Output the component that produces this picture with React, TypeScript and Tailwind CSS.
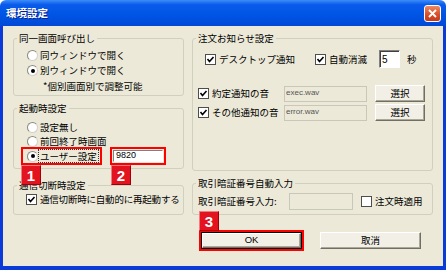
const face = "bg-[#ECE9D8]";

function Radio({ checked }: { checked?: boolean }) {
  return (
    <span className="flex h-[11px] w-[11px] shrink-0 items-center justify-center rounded-full border border-t-[#8a8a80] border-l-[#8a8a80] border-r-[#d4d0c8] border-b-[#d4d0c8] bg-white">
      {checked && <span className="h-[4px] w-[4px] rounded-full bg-black" />}
    </span>
  );
}

function Check({ checked }: { checked?: boolean }) {
  return (
    <span className="flex h-[11px] w-[11px] shrink-0 items-center justify-center border border-[#4d4d4d] bg-white">
      {checked && (
        <svg width="9" height="9" viewBox="0 0 9 9">
          <polyline points="1.5,4 3.5,6.5 7.5,2" fill="none" stroke="#000" strokeWidth="1.6" />
        </svg>
      )}
    </span>
  );
}

function Btn({ children, className }: { children: React.ReactNode; className?: string }) {
  return (
    <div
      className={
        "flex items-center justify-center border border-t-white border-l-white border-r-[#716F64] border-b-[#716F64] bg-[#F1EFE6] shadow-[inset_-1px_-1px_0_#ACA899] " +
        (className ?? "")
      }
    >
      {children}
    </div>
  );
}

function Badge({ n }: { n: string }) {
  return (
    <span className="absolute left-0 z-10 flex h-[20px] w-[20px] items-center justify-center border border-t-[#f37c82] border-l-[#f37c82] border-r-[#9c0008] border-b-[#9c0008] bg-[#E3141F] font-['Liberation_Sans',sans-serif] text-[15px] font-bold leading-none text-white">
      {n}
    </span>
  );
}

function Group({ title, className, children }: { title: string; className: string; children: React.ReactNode }) {
  return (
    <fieldset className={"rounded-[3px] border border-[#D0D0BF] " + className}>
      <legend className="ml-[3px] px-[2px] text-[9.5px] leading-[12px]">{title}</legend>
      {children}
    </fieldset>
  );
}

export default function App() {
  return (
    <div className="flex h-[270px] w-[446px] flex-col whitespace-nowrap font-['Noto_Sans_CJK_JP',sans-serif] text-black">
      {/* title bar */}
      <div className="flex h-[26px] shrink-0 items-center justify-between rounded-t-[6px] bg-[linear-gradient(to_bottom,#3D8EF8,#0A5BEC_18%,#0055E5_55%,#0049D6)] pl-[6px] pr-[5px]">
        <span className="text-[10.5px] font-bold text-white [text-shadow:1px_1px_#0a1f8a]">環境設定</span>
        <span className="flex h-[17px] w-[17px] items-center justify-center rounded-[3px] border border-white bg-[linear-gradient(to_bottom,#EE8A64,#D9502A_55%,#C23A1C)]">
          <svg width="9" height="9" viewBox="0 0 9 9">
            <path d="M1 1L8 8M8 1L1 8" stroke="#fff" strokeWidth="1.8" />
          </svg>
        </span>
      </div>

      {/* body */}
      <div className={"flex flex-1 border-x-[3px] border-b-[4px] border-[#0A3BD8] pl-[10px] pt-[6px] " + face}>
        {/* left column */}
        <div className="flex w-[171px] flex-col">
          <Group title="同一画面呼び出し" className="h-[64px]">
            <div className="flex flex-col pl-[13px] pt-[4px] text-[9.5px]">
              <div className="flex h-[15px] items-center gap-[2px]">
                <Radio />
                <span>同ウィンドウで開く</span>
              </div>
              <div className="flex h-[15px] items-center gap-[2px]">
                <Radio checked />
                <span>別ウィンドウで開く</span>
              </div>
              <div className="flex h-[16px] items-center pl-[16px]">*個別画面別で調整可能</div>
            </div>
          </Group>

          <Group title="起動時設定" className="mt-[6px] h-[67px]">
            <div className="flex flex-col pt-[6px] text-[9.5px]">
              <div className="flex h-[15px] items-center gap-[2px] pl-[13px]">
                <Radio />
                <span>設定無し</span>
              </div>
              <div className="flex h-[12px] items-center gap-[2px] pl-[13px]">
                <Radio />
                <span>前回終了時画面</span>
              </div>
              <div className="flex h-[18px] items-center pl-[7px]">
                <div className="relative flex h-[18px] w-[81px] items-center border-2 border-[#FF0000] pl-[4px]">
                  <Radio checked />
                  <span className="ml-[1px] px-[1px] leading-[12px] outline outline-1 outline-dotted outline-[#333]">ユーザー設定</span>
                  <span className="absolute left-[-2px] top-[16px]">
                    <Badge n="1" />
                  </span>
                </div>
                <div className="relative ml-[8px] flex h-[18px] w-[56px] items-center border-2 border-[#FF0000] p-[1px]">
                  <div className="flex h-[12px] w-[50px] items-center border border-t-[#808080] border-l-[#808080] border-r-white border-b-white bg-white pl-[2px] font-['Liberation_Sans',sans-serif] text-[9px]">
                    9820
                  </div>
                  <span className="absolute left-[-1px] top-[16px]">
                    <Badge n="2" />
                  </span>
                </div>
              </div>
            </div>
          </Group>

          <Group title="通信切断時設定" className="mt-[10px] h-[36px]">
            <div className="flex h-[14px] items-center gap-[3px] pl-[12px] pt-[2px] text-[9.5px]">
              <Check checked />
              <span className="tracking-[-0.2px]">通信切断時に自動的に再起動する</span>
            </div>
          </Group>
        </div>

        {/* right column */}
        <div className="ml-[8px] flex w-[241px] flex-col">
          <Group title="注文お知らせ設定" className="h-[139px]">
            <div className="flex flex-col pt-[6px] text-[9.5px]">
              <div className="flex h-[18px] items-center pl-[12px]">
                <div className="flex w-[110px] items-center gap-[3px]">
                  <Check checked />
                  <span>デスクトップ通知</span>
                </div>
                <div className="flex w-[64px] items-center gap-[3px]">
                  <Check checked />
                  <span>自動消滅</span>
                </div>
                <div className="flex h-[18px] w-[21px] items-start border border-t-[#808080] border-l-[#808080] border-r-white border-b-white bg-white pl-[2px] pt-[1px] font-['Liberation_Sans',sans-serif] text-[10px] shadow-[inset_1px_1px_0_#404040]">
                  5
                </div>
                <span className="ml-[7px]">秒</span>
              </div>

              <div className="mt-[17px] flex h-[17px] items-center pl-[5px]">
                <div className="flex w-[86px] items-center gap-[3px]">
                  <Check checked />
                  <span>約定通知の音</span>
                </div>
                <div className="flex h-[16px] w-[83px] items-start border border-[#C9C7BA] pl-[1px] font-['Liberation_Sans',sans-serif] text-[8px] text-[#555]">
                  exec.wav
                </div>
                <Btn className="ml-[8px] h-[17px] w-[50px]">選択</Btn>
              </div>

              <div className="mt-[2px] flex h-[17px] items-center pl-[5px]">
                <div className="flex w-[86px] items-center gap-[3px]">
                  <Check checked />
                  <span>その他通知の音</span>
                </div>
                <div className="flex h-[16px] w-[83px] items-start border border-[#C9C7BA] pl-[1px] font-['Liberation_Sans',sans-serif] text-[8px] text-[#555]">
                  error.wav
                </div>
                <Btn className="ml-[8px] h-[17px] w-[50px]">選択</Btn>
              </div>
            </div>
          </Group>

          <Group title="取引暗証番号自動入力" className="mt-[6px] h-[38px]">
            <div className="mt-[4px] flex h-[17px] items-center pl-[5px] text-[9.5px]">
              <span className="w-[91px]">取引暗証番号入力:</span>
              <div className="h-[17px] w-[64px] border border-[#C9C7BA]" />
              <span className="ml-[8px] flex items-center gap-[3px]">
                <Check />
                <span>注文時適用</span>
              </span>
            </div>
          </Group>

          <div className="mt-[15px] flex items-start text-[9.5px]">
            <div className="relative ml-[7px] flex h-[21px] w-[105px] items-center justify-center border-2 border-[#FF0000]">
              <span className="absolute left-[-2px] top-[-21px]">
                <Badge n="3" />
              </span>
              <div className="flex h-[17px] w-[101px] border border-black">
                <Btn className="h-full w-full font-['Liberation_Sans',sans-serif] text-[9.5px]">OK</Btn>
              </div>
            </div>
            <Btn className="ml-[16px] mt-[2px] h-[17px] w-[101px]">取消</Btn>
          </div>
        </div>
      </div>
    </div>
  );
}
